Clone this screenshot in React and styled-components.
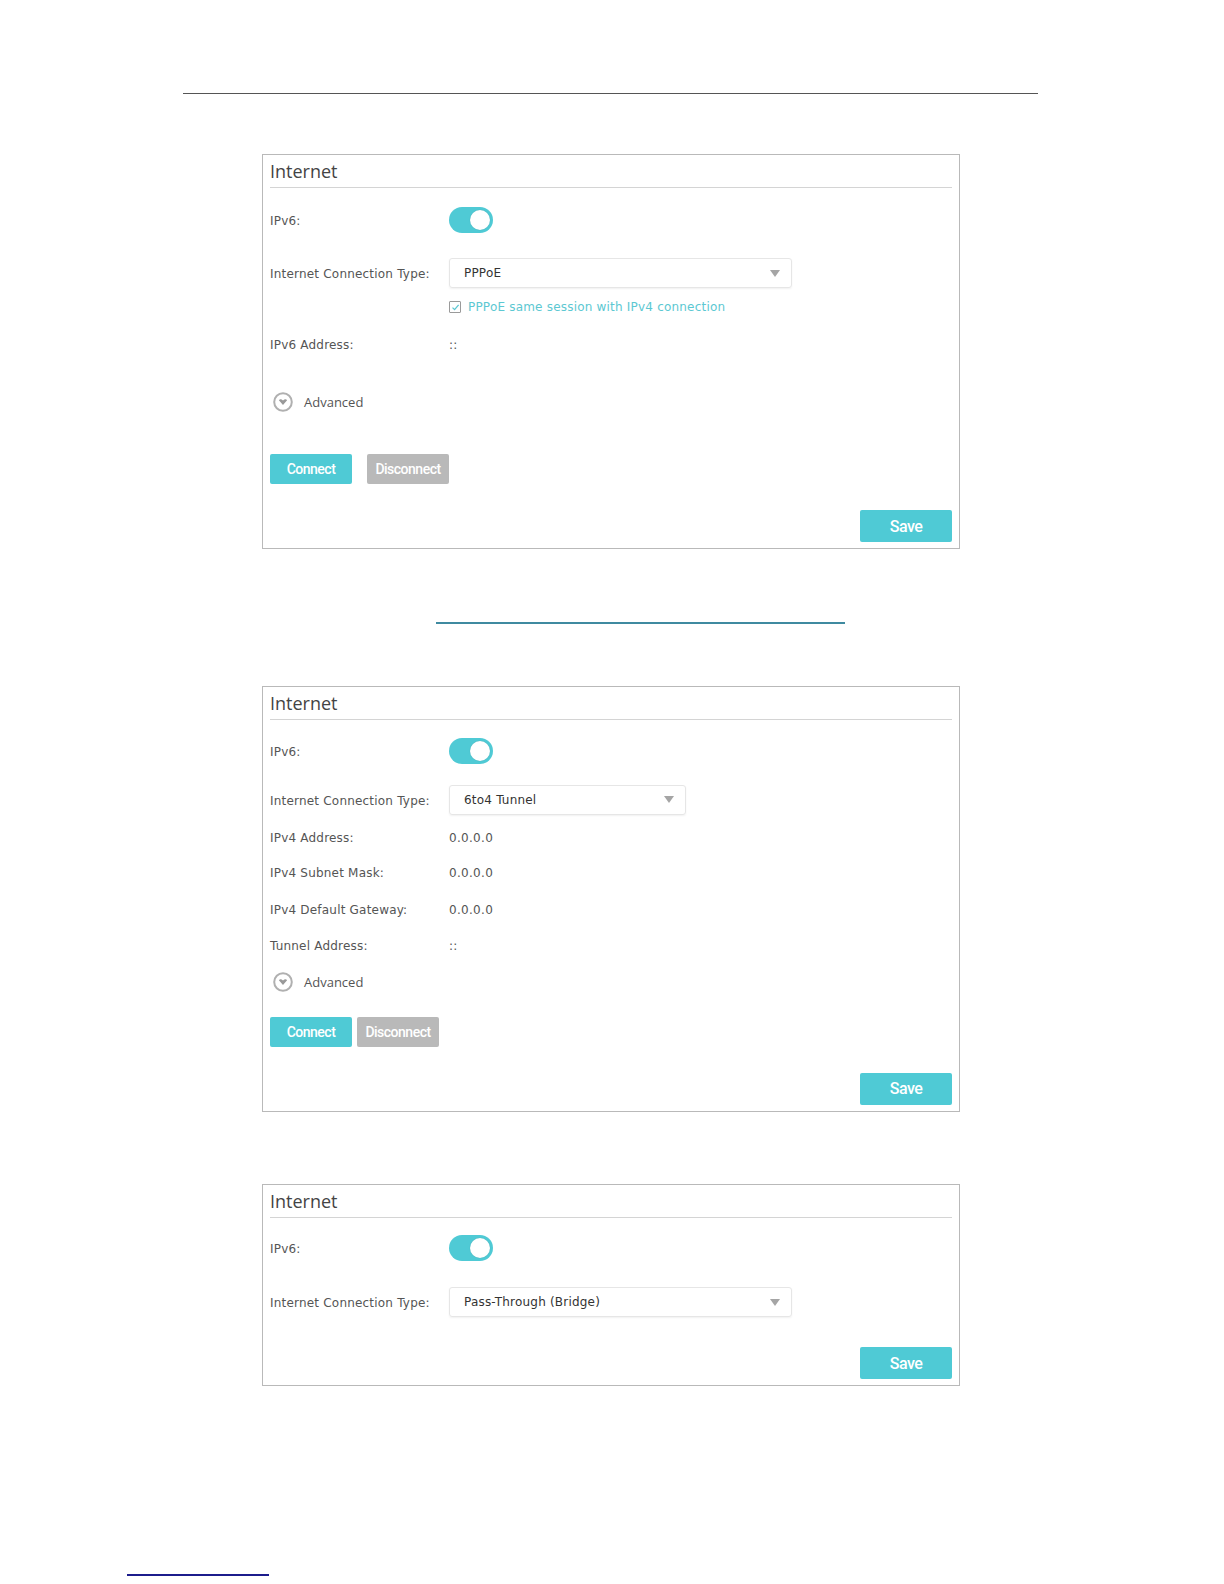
import React from "react";
import styled, { createGlobalStyle } from "styled-components";

const Global = createGlobalStyle`
  html, body { margin: 0; padding: 0; background: #fff; }
  body { font-family: "DejaVu Sans", "Open Sans", sans-serif; }
  * { box-sizing: border-box; }
`;

const TEAL = "#4fcad5";

const Page = styled.div`
  width: 1224px;
  min-height: 1584px;
  display: flex;
  flex-direction: column;
  align-items: flex-start;
`;

const Rule = styled.div`
  margin-top: ${(p) => p.$mt}px;
  margin-left: ${(p) => p.$ml}px;
  width: ${(p) => p.$w}px;
  height: ${(p) => p.$h || 1}px;
  background: ${(p) => p.$color};
`;

const Panel = styled.section`
  margin-top: ${(p) => p.$mt}px;
  margin-left: ${(p) => p.$ml || 262}px;
  width: 698px;
  border: 1px solid #b9b9b9;
  padding: 0 7px 6px 7px;
  display: flex;
  flex-direction: column;
`;

const Title = styled.div`
  height: 33px;
  padding-top: 5px;
  font-family: "Open Sans", "Noto Sans", sans-serif;
  font-size: 18px;
  line-height: 22px;
  color: #444;
  border-bottom: 1px solid #d4d4d4;
`;

const Row = styled.div`
  margin-top: ${(p) => p.$mt}px;
  height: ${(p) => p.$h || 16}px;
  display: flex;
  align-items: center;
`;

const Label = styled.div`
  width: 179px;
  flex: none;
  padding-top: 2px;
  font-size: 12px;
  letter-spacing: 0.2px;
  color: #555;
  white-space: nowrap;
`;

const Value = styled.div`
  padding-top: 2px;
  font-size: 12px;
  letter-spacing: 0.3px;
  color: #555;
`;

const Toggle = styled.div`
  width: 44px;
  height: 26px;
  border-radius: 13px;
  background: ${TEAL};
  position: relative;
  &::after {
    content: "";
    position: absolute;
    top: 3px;
    right: 3px;
    width: 20px;
    height: 20px;
    border-radius: 50%;
    background: #fff;
    box-shadow: 0 0 1px rgba(0, 0, 0, 0.2);
  }
`;

const Select = styled.div`
  width: ${(p) => p.$w}px;
  height: ${(p) => p.$h || 30}px;
  border: 1px solid #e6e6e6;
  border-radius: 3px;
  box-shadow: 0 1px 2px rgba(0, 0, 0, 0.06);
  display: flex;
  align-items: center;
  justify-content: space-between;
  padding: 0 11px 0 14px;
  font-size: 12px;
  letter-spacing: 0.2px;
  color: #333;
`;

const Arrow = styled.span`
  width: 0;
  height: 0;
  border-left: 5px solid transparent;
  border-right: 5px solid transparent;
  border-top: 7px solid #a5a5a5;
`;

const CheckLine = styled.div`
  margin-left: 179px;
  display: flex;
  align-items: center;
  gap: 7px;
  font-size: 12px;
  letter-spacing: 0.2px;
  color: #5cc8d2;
`;

const Box = styled.span`
  width: 12px;
  height: 12px;
  border: 1px solid #9a9a9a;
  border-radius: 1px;
  display: flex;
  align-items: center;
  justify-content: center;
`;

const Adv = styled.div`
  display: flex;
  align-items: center;
  gap: 11px;
  margin-left: 3px;
  font-family: "Open Sans", "Noto Sans", sans-serif;
  font-size: 13px;
  color: #555;
`;

const Buttons = styled.div`
  margin-top: ${(p) => p.$mt}px;
  display: flex;
  gap: ${(p) => p.$gap}px;
`;

const Btn = styled.button`
  width: ${(p) => p.$w || 82}px;
  height: ${(p) => p.$h || 30}px;
  border: none;
  border-radius: 2px;
  background: ${(p) => (p.$gray ? "#b9b9b9" : TEAL)};
  color: #fff;
  font-family: "Roboto", "Open Sans", sans-serif;
  font-size: ${(p) => p.$fs || 14}px;
  font-weight: 500;
  letter-spacing: -0.5px;
  padding: 0;
  cursor: pointer;
`;

const SaveRow = styled.div`
  margin-top: ${(p) => p.$mt}px;
  display: flex;
  justify-content: flex-end;
`;

function AdvIcon() {
  return (
    <svg width="20" height="20" viewBox="0 0 20 20">
      <circle cx="10" cy="10" r="8.8" fill="#fff" stroke="#b0b0b0" strokeWidth="2" />
      <path d="M5.9 8.3 Q7.3 6.3 10 8.4 Q12.7 6.3 14.1 8.3 L10 13 Z" fill="#999" />
    </svg>
  );
}

function Check() {
  return (
    <svg width="9" height="9" viewBox="0 0 9 9">
      <path d="M1.5 4.6 L3.6 6.6 L7.6 1.9" fill="none" stroke="#5cc8d2" strokeWidth="1.3" />
    </svg>
  );
}

function Advanced({ mt }) {
  return (
    <Row $mt={mt} $h={20}>
      <Adv>
        <AdvIcon />
        Advanced
      </Adv>
    </Row>
  );
}

export default function App() {
  return (
    <Page>
      <Global />
      <Rule $mt={93} $ml={183} $w={855} $h={1} $color="#555" />

      <Panel $mt={60}>
        <Title>Internet</Title>
        <Row $mt={19} $h={26}>
          <Label>IPv6:</Label>
          <Toggle />
        </Row>
        <Row $mt={25} $h={30}>
          <Label>Internet Connection Type:</Label>
          <Select $w={343}>
            PPPoE
            <Arrow />
          </Select>
        </Row>
        <Row $mt={11} $h={16}>
          <CheckLine>
            <Box>
              <Check />
            </Box>
            PPPoE same session with IPv4 connection
          </CheckLine>
        </Row>
        <Row $mt={21} $h={16}>
          <Label>IPv6 Address:</Label>
          <Value>::</Value>
        </Row>
        <Advanced mt={40} />
        <Buttons $mt={42} $gap={15}>
          <Btn>Connect</Btn>
          <Btn $gray>Disconnect</Btn>
        </Buttons>
        <SaveRow $mt={26}>
          <Btn $w={92} $h={32} $fs={16}>Save</Btn>
        </SaveRow>
      </Panel>

      <Rule $mt={73} $ml={436} $w={409} $h={1.5} $color="#3f8aa0" />

      <Panel $mt={62}>
        <Title>Internet</Title>
        <Row $mt={18.5} $h={26}>
          <Label>IPv6:</Label>
          <Toggle />
        </Row>
        <Row $mt={20.5} $h={30}>
          <Label>Internet Connection Type:</Label>
          <Select $w={237}>
            6to4 Tunnel
            <Arrow />
          </Select>
        </Row>
        <Row $mt={14} $h={16}>
          <Label>IPv4 Address:</Label>
          <Value>0.0.0.0</Value>
        </Row>
        <Row $mt={19.5} $h={16}>
          <Label>IPv4 Subnet Mask:</Label>
          <Value>0.0.0.0</Value>
        </Row>
        <Row $mt={20.5} $h={16}>
          <Label>IPv4 Default Gateway:</Label>
          <Value>0.0.0.0</Value>
        </Row>
        <Row $mt={20.3} $h={16}>
          <Label>Tunnel Address:</Label>
          <Value>::</Value>
        </Row>
        <Advanced mt={19.3} />
        <Buttons $mt={25.4} $gap={5}>
          <Btn>Connect</Btn>
          <Btn $gray>Disconnect</Btn>
        </Buttons>
        <SaveRow $mt={25.5}>
          <Btn $w={92} $h={32} $fs={16}>Save</Btn>
        </SaveRow>
      </Panel>

      <Panel $mt={71.6}>
        <Title>Internet</Title>
        <Row $mt={17} $h={26}>
          <Label>IPv6:</Label>
          <Toggle />
        </Row>
        <Row $mt={26.5} $h={30}>
          <Label>Internet Connection Type:</Label>
          <Select $w={343}>
            Pass-Through (Bridge)
            <Arrow />
          </Select>
        </Row>
        <SaveRow $mt={30}>
          <Btn $w={92} $h={32} $fs={16}>Save</Btn>
        </SaveRow>
      </Panel>

      <Rule $mt={188} $ml={127} $w={142} $h={2} $color="#1c1c8c" />
    </Page>
  );
}
